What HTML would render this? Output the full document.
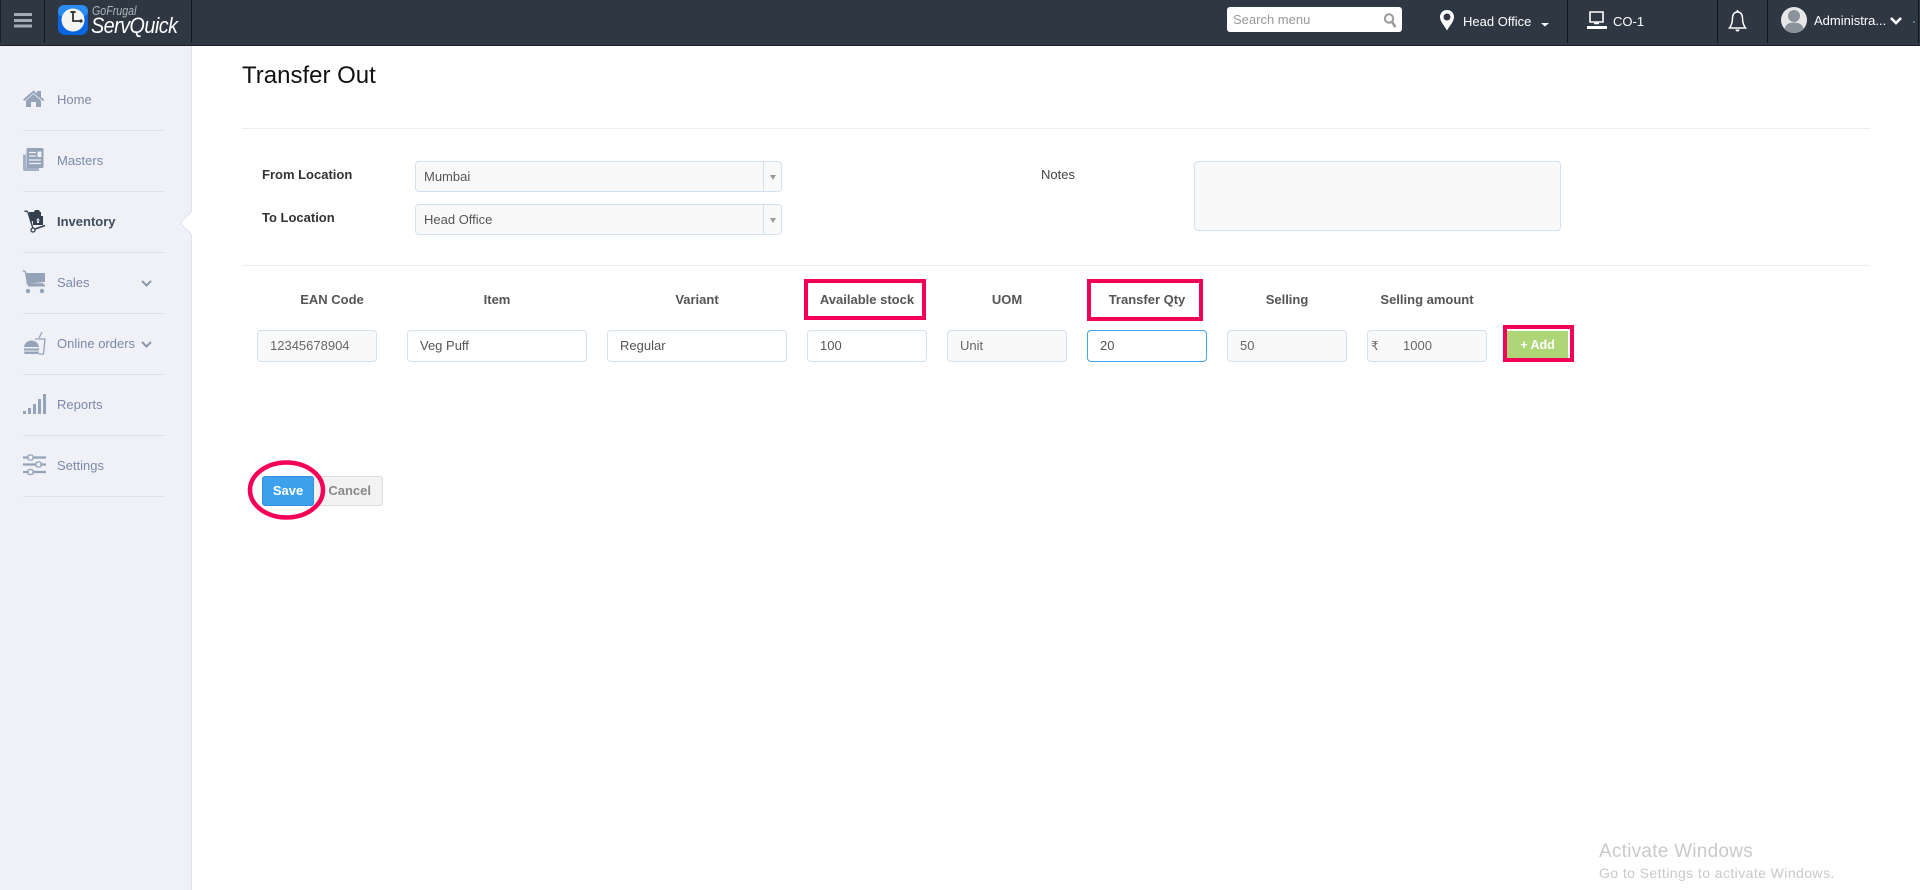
<!DOCTYPE html>
<html><head><meta charset="utf-8"><title>Transfer Out</title>
<style>
html,body{margin:0;padding:0;width:1920px;height:890px;overflow:hidden;background:#fff;font-family:"Liberation Sans",Arial,sans-serif;}
.a{position:absolute;white-space:nowrap;}
#top{left:0;top:0;width:1920px;height:45px;background:#2e3742;border-bottom:1px solid #1b2027;}
.sep{position:absolute;top:0;width:1px;height:43px;background:#12161b;}
#side{left:0;top:46px;width:192px;height:844px;background:#eff1f7;border-right:1px solid #dde3ec;box-sizing:border-box;}
.m{position:absolute;left:57px;font-size:13px;line-height:16px;color:#7b89a8;}
.ms{position:absolute;left:23px;width:142px;height:1px;background:#dde2ea;}
.lbl{position:absolute;font-size:13px;line-height:16px;font-weight:bold;color:#333;}
.hd{position:absolute;top:292px;width:140px;text-align:center;font-size:13px;line-height:16px;font-weight:bold;color:#555;}
.f{position:absolute;top:330px;height:32px;box-sizing:border-box;border:1px solid #d3e0ee;border-radius:4px;background:#fff;font-size:13px;line-height:30px;color:#555;}
.ro{background:#f9f9f9;color:#666;}
.sel{position:absolute;left:415px;width:367px;height:31px;box-sizing:border-box;border:1px solid #d3e0ee;border-radius:4px;background:#f9f9f9;font-size:13px;line-height:30px;color:#555;padding-left:8px;}
.sel i{position:absolute;right:17px;top:0;bottom:0;width:1px;background:#d3e0ee;}
.sel b{position:absolute;right:5px;top:13px;width:0;height:0;border-left:3px solid transparent;border-right:3px solid transparent;border-top:5px solid #999;}
.rb{position:absolute;box-sizing:border-box;border:4px solid #f50057;}
</style></head><body>
<div class="a" id="top">
<div class="sep" style="left:0;background:#1b2027"></div>
<div class="sep" style="left:44px"></div>
<div class="sep" style="left:191px"></div>
<div class="sep" style="left:1567px"></div>
<div class="sep" style="left:1717px"></div>
<div class="sep" style="left:1767px"></div>
<div class="sep" style="left:1918px"></div>
</div>
<div class="a" style="left:92px;top:3px;font-size:13px;line-height:16px;font-style:italic;color:#aeb4bb;transform:scaleX(.82);transform-origin:left top;">GoFrugal</div>
<div class="a" style="left:91px;top:13px;font-size:22px;line-height:26px;font-style:italic;color:#fff;letter-spacing:-.6px;transform:scaleX(.9);transform-origin:left top;">ServQuick</div>
<div class="a" style="left:1227px;top:7px;width:175px;height:25px;background:#fff;border-radius:3px;"></div>
<div class="a" style="left:1233px;top:12px;font-size:13px;line-height:16px;color:#999;">Search menu</div>
<div class="a" style="left:1463px;top:14px;font-size:13px;line-height:16px;color:#fff;">Head Office</div>
<div class="a" style="left:1613px;top:14px;font-size:13px;line-height:16px;color:#fff;">CO-1</div>
<div class="a" style="left:1814px;top:13px;font-size:13px;line-height:16px;color:#fff;">Administra...</div>

<div class="a" id="side"></div>
<div class="m" style="top:92px">Home</div>
<div class="ms" style="top:130px"></div>
<div class="m" style="top:153px">Masters</div>
<div class="ms" style="top:191px"></div>
<div class="m" style="top:214px;font-weight:bold;color:#414b5e">Inventory</div>
<div class="ms" style="top:252px"></div>
<div class="m" style="top:275px">Sales</div>
<div class="ms" style="top:313px"></div>
<div class="m" style="top:336px">Online orders</div>
<div class="ms" style="top:374px"></div>
<div class="m" style="top:397px">Reports</div>
<div class="ms" style="top:435px"></div>
<div class="m" style="top:458px">Settings</div>
<div class="ms" style="top:496px"></div>

<div class="a" style="left:242px;top:62px;font-size:24px;line-height:28px;color:#111;">Transfer Out</div>
<div class="a" style="left:242px;top:128px;width:1628px;height:1px;background:#eceff2"></div>
<div class="a" style="left:242px;top:265px;width:1628px;height:1px;background:#eceff2"></div>

<div class="lbl" style="left:262px;top:167px">From Location</div>
<div class="lbl" style="left:262px;top:210px">To Location</div>
<div class="sel" style="top:161px">Mumbai<i></i><b></b></div>
<div class="sel" style="top:204px">Head Office<i></i><b></b></div>
<div class="a" style="left:1041px;top:167px;font-size:13px;line-height:16px;color:#444;">Notes</div>
<div class="a" style="left:1194px;top:161px;width:367px;height:70px;box-sizing:border-box;border:1px solid #d3e0ee;border-radius:4px;background:#f9f9f9;"></div>

<div class="hd" style="left:262px">EAN Code</div>
<div class="hd" style="left:427px">Item</div>
<div class="hd" style="left:627px">Variant</div>
<div class="hd" style="left:797px">Available stock</div>
<div class="hd" style="left:937px">UOM</div>
<div class="hd" style="left:1077px">Transfer Qty</div>
<div class="hd" style="left:1217px">Selling</div>
<div class="hd" style="left:1357px">Selling amount</div>

<div class="f ro" style="left:257px;width:120px;padding-left:12px">12345678904</div>
<div class="f" style="left:407px;width:180px;padding-left:12px">Veg Puff</div>
<div class="f" style="left:607px;width:180px;padding-left:12px">Regular</div>
<div class="f" style="left:807px;width:120px;padding-left:12px">100</div>
<div class="f ro" style="left:947px;width:120px;padding-left:12px">Unit</div>
<div class="f" style="left:1087px;width:120px;padding-left:12px;border-color:#42a5f5">20</div>
<div class="f ro" style="left:1227px;width:120px;padding-left:12px">50</div>
<div class="f ro" style="left:1367px;width:120px;"><span style="position:absolute;left:3px;font-family:'DejaVu Sans',sans-serif;font-size:12px;">₹</span><span style="position:absolute;left:35px">1000</span></div>

<div class="a" style="left:1507px;top:331px;width:61px;height:27px;background:#aed576;color:#fff;font-size:12.5px;font-weight:bold;line-height:29px;text-align:center;">+ Add</div>
<div class="rb" style="left:804px;top:279px;width:122px;height:41px"></div>
<div class="rb" style="left:1087px;top:279px;width:116px;height:42px"></div>
<div class="rb" style="left:1503px;top:325px;width:71px;height:37px"></div>

<div class="a" style="left:300px;top:476px;width:83px;height:30px;box-sizing:border-box;border:1px solid #ddd;border-radius:3px;background:#f2f2f2;color:#888;font-size:13px;font-weight:bold;line-height:28px;text-align:right;padding-right:11px;">Cancel</div>
<div class="a" style="left:262px;top:476px;width:52px;height:30px;box-sizing:border-box;border:1px solid #2f8fdc;border-radius:3px;background:#3ea1ee;color:#fff;font-size:13px;font-weight:bold;line-height:28px;text-align:center;">Save</div>

<div class="a" style="left:1599px;top:840px;font-size:19px;line-height:24px;color:#c9c9c9;letter-spacing:.25px;">Activate Windows</div>
<div class="a" style="left:1599px;top:865px;font-size:14px;line-height:16px;color:#c9c9c9;letter-spacing:.42px;">Go to Settings to activate Windows.</div>

<svg class="a" style="left:0;top:0" width="1920" height="890" viewBox="0 0 1920 890" fill="none">
<!-- hamburger -->
<path d="M14 14.500h18M14 20.500h18M14 26h18" stroke="#a3abb3" stroke-width="3"/>
<!-- logo -->
<rect x="58" y="5" width="30" height="30" rx="7" fill="#0a66e0"/>
<rect x="58" y="5" width="30" height="12" rx="6" fill="#2a8cf0"/>
<circle cx="73" cy="20" r="11.500" fill="#f4f4f2"/>
<path d="M73 12.500v8.500h7" stroke="#333" stroke-width="1.800"/><path d="M70.500 12h5" stroke="#333" stroke-width="2"/><circle cx="81" cy="21" r="1.600" fill="#333"/>
<!-- search icon -->
<circle cx="1389" cy="18.500" r="4.200" stroke="#9a9a9a" stroke-width="2"/><path d="M1392 22l3.500 5" stroke="#9a9a9a" stroke-width="2.400"/>
<!-- pin -->
<path fill-rule="evenodd" d="M1447 10c-4 0-7 3-7 7 0 4.500 5 9.500 7 13.500 2-4 7-9 7-13.500 0-4-3-7-7-7zm0 3.500a3.500 3.500 0 1 1 0 7 3.500 3.500 0 0 1 0-7z" fill="#fff"/>
<path d="M1541 23h8l-4 3.500z" fill="#fff"/>
<!-- monitor -->
<path d="M1590 12h13v10h-13z" stroke="#fff" stroke-width="1.600"/><path d="M1587 26h20v3h-20z" fill="#fff"/><path d="M1594 23.500h5" stroke="#fff" stroke-width="1.500"/>
<!-- bell -->
<path d="M1737.500 12c-3.500 0-5 3-5 6 0 5-1.500 8-3 10h16c-1.500-2-3-5-3-10 0-3-1.500-6-5-6z" stroke="#fff" stroke-width="1.500"/><path d="M1735.500 29.500a2 2 0 0 0 4 0z" fill="#fff"/><circle cx="1737.500" cy="11" r="1" fill="#fff"/>
<!-- avatar -->
<circle cx="1794" cy="20" r="13" fill="#e6e6e6"/>
<circle cx="1794" cy="16" r="6" fill="#8a929b"/>
<path d="M1784.500 29c1-5 5-6.500 9.500-6.500s8.500 1.500 9.500 6.500a13 13 0 0 1-19 0z" fill="#8a929b"/>
<path d="M1891 18l5 5 5-5" stroke="#fff" stroke-width="2.600"/>
<path d="M1913 22h2" stroke="#7fb0d8" stroke-width="1"/>
<!-- notch -->
<path d="M192 211l-12 12 12 12z" fill="#fff"/><path d="M192 211l-12 12 12 12" stroke="#dde3ec"/>
<!-- home -->
<path d="M23 99.500l10.500-9 3.500 3v-2.500h4v6l3.500 3-1.500 1-9.500-8-9 8z" fill="#95a3b9"/><path d="M26 100.500l7.500-6.500 7.500 6.500v6.500h-5v-5h-5v5h-5z" fill="#95a3b9"/>
<!-- masters -->
<path d="M23 154.500h3v13h13v3.500h-14a2 2 0 0 1-2-2z" fill="#a4b1c6"/>
<rect x="26.500" y="148" width="17" height="20" rx="1.500" fill="#95a3b9"/>
<path d="M29 152.500h7M29 156h7M29 160h12M29 163.500h12" stroke="#eff1f7" stroke-width="1.300"/><rect x="37.500" y="151.500" width="4" height="5.500" fill="#eff1f7"/>
<!-- inventory -->
<path d="M24.500 211.500c3-1.500 3.500 1 4.500 4l4 13" stroke="#333e4f" stroke-width="1.300"/><circle cx="33" cy="230" r="2" stroke="#333e4f" stroke-width="1.300"/><path d="M35 229l10-3.500" stroke="#333e4f" stroke-width="1.500"/>
<path d="M29 212h5l1-2h4l1 2h1v4h-8v5l-3 1z" fill="#333e4f"/><rect x="33" y="216" width="10" height="9" fill="#333e4f"/><path d="M38 218l-2 2.500h4z M37 221h2v2h-2z" fill="#eff1f7"/>
<!-- cart -->
<path d="M23 270.500l2.500 1.500 2 12h16" stroke="#95a3b9" stroke-width="1.400"/><path d="M26 273h19v9l-17 1.500z" fill="#95a3b9"/><path d="M28 284.500h17v2h-17z" fill="#95a3b9"/><circle cx="28" cy="291" r="2.200" fill="#95a3b9"/><circle cx="42" cy="291" r="2.200" fill="#95a3b9"/>
<!-- online orders -->
<path d="M35 339h10l-1.500 15h-5" stroke="#95a3b9" stroke-width="1.300"/><path d="M39 338l3-6" stroke="#95a3b9" stroke-width="1.300"/>
<path d="M24 347c.5-4 4-6.500 7.500-6.500s7 2.500 7.500 6.500zM24 348.500h15v2h-15zM24 351.500h15c0 2-1 2.500-2 2.500h-11c-1 0-2-.5-2-2.500z" fill="#95a3b9"/>
<!-- reports -->
<path d="M23 411h3v3h-3zM28 408h3v6h-3z M33 404h3v10h-3z M38 399h3v15h-3z M43 394h3v20h-3z" fill="#95a3b9"/>
<!-- settings -->
<path d="M23 457.500h23M23 464.500h23M23 472h23" stroke="#95a3b9" stroke-width="2.200"/>
<rect x="28" y="455" width="5" height="5" rx="1.500" fill="#eff1f7" stroke="#95a3b9" stroke-width="1.300"/><rect x="36" y="462" width="5" height="5" rx="1.500" fill="#eff1f7" stroke="#95a3b9" stroke-width="1.300"/><rect x="28" y="469.500" width="5" height="5" rx="1.500" fill="#eff1f7" stroke="#95a3b9" stroke-width="1.300"/>
<!-- sidebar chevrons -->
<path d="M142 281l4.500 4.500 4.500-4.500M142 342l4.500 4.500 4.500-4.500" stroke="#8b96a8" stroke-width="2"/>
<!-- save circle -->
<ellipse cx="286.500" cy="490" rx="36.500" ry="27.500" stroke="#f50057" stroke-width="4.500"/>
</svg>
</body></html>
